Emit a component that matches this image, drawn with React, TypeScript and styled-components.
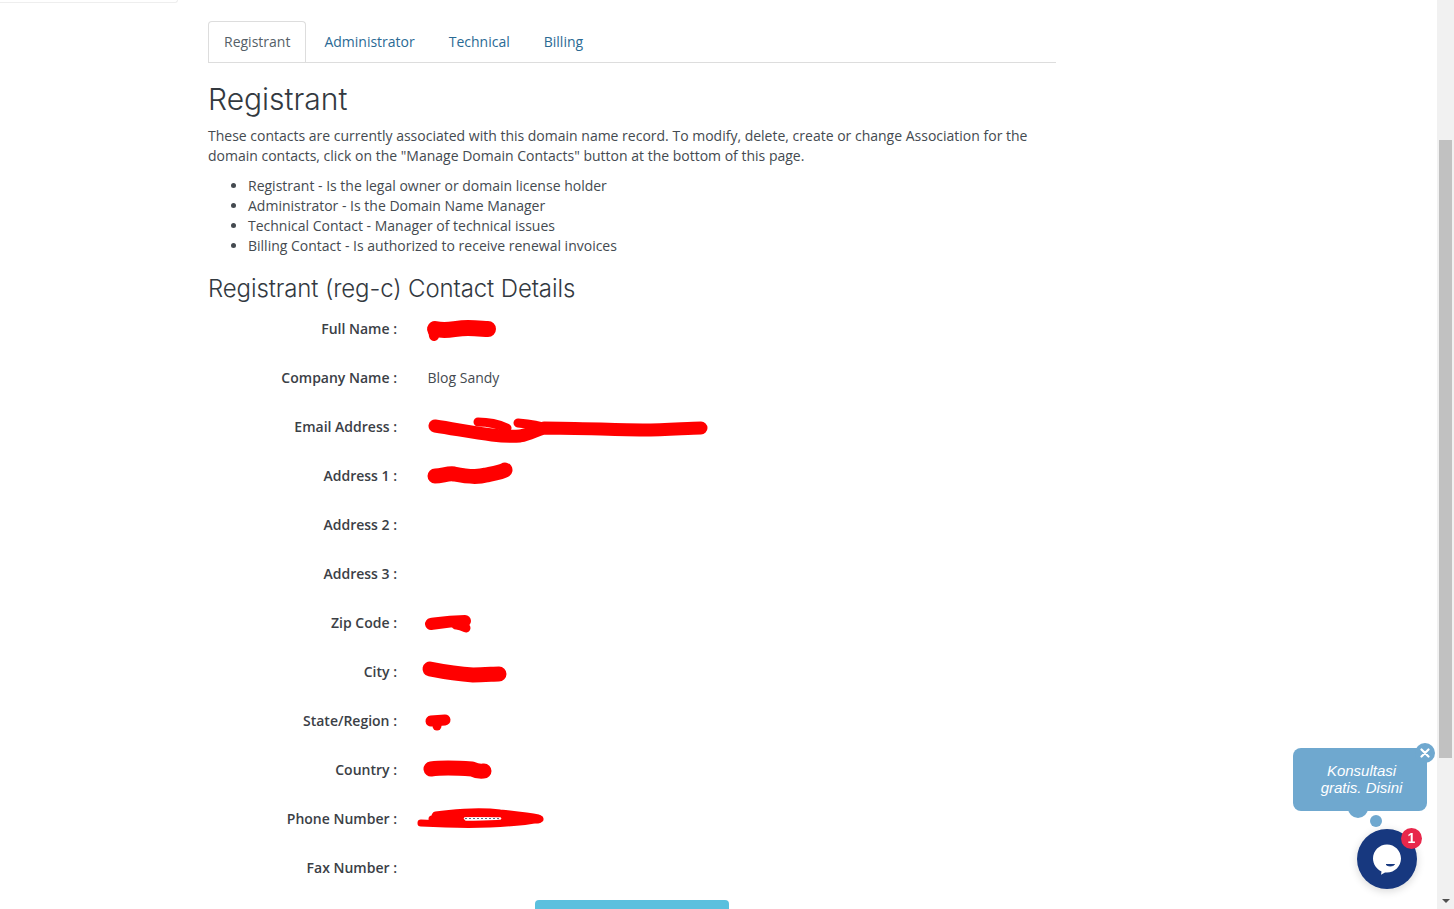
import styled, { createGlobalStyle } from 'styled-components';

const tabs = ['Registrant', 'Administrator', 'Technical', 'Billing'];

const roles = [
  'Registrant - Is the legal owner or domain license holder',
  'Administrator - Is the Domain Name Manager',
  'Technical Contact - Manager of technical issues',
  'Billing Contact - Is authorized to receive renewal invoices',
];

// scribbles are drawn relative to the top left of the value cell
const contacts = [
  {
    label: 'Full Name',
    scribble: [
      { d: 'M5 18 L6 24', w: 10 },
      { d: 'M7 17 C20 20 26 16 40 16 C50 16 56 17 60 17', w: 16 },
    ],
  },
  { label: 'Company Name', value: 'Blog Sandy' },
  {
    label: 'Email Address',
    scribble: [
      { d: 'M7 16 C40 21 70 28 92 26 C102 24 108 20 116 18 C150 18 190 20 215 20 C240 20 260 18 273 18', w: 13 },
      { d: 'M50 12 C60 12 70 14 79 18 M90 13 C100 14 110 15 118 18', w: 9 },
    ],
  },
  {
    label: 'Address 1',
    scribble: [{ d: 'M7 17 C14 17 20 14 26 15 C36 17 48 19 58 16 C68 14 74 13 77 11', w: 15 }],
  },
  { label: 'Address 2' },
  { label: 'Address 3' },
  {
    label: 'Zip Code',
    scribble: [
      { d: 'M3 18 C10 17 20 15 37 15', w: 12 },
      { d: 'M28 19 C32 19 36 21 38 22', w: 9 },
    ],
  },
  { label: 'City', scribble: [{ d: 'M2 14 C12 16 28 19 45 20 C56 20 66 19 71 19', w: 15 }] },
  {
    label: 'State/Region',
    scribble: [
      { d: 'M3 17 L17 16', w: 11 },
      { d: 'M9 18 L9 22', w: 9 },
    ],
  },
  { label: 'Country', scribble: [{ d: 'M3 16 C10 15 30 15 44 16 C50 19 55 18 56 18', w: 15 }] },
  {
    label: 'Phone Number',
    scribble: [
      { d: 'M-7 21 C30 23 80 23 112 17', w: 7 },
      { d: 'M8 14 C20 12 50 9 72 12 C90 14 100 15 110 17', w: 9 },
      { d: 'M4 17 L34 17 M73 17 L110 17', w: 7 },
      { d: 'M37 16.5 L72 16.5', w: 2.5, stroke: '#ffffff' },
      { d: 'M37 16.5 L72 16.5', w: 1, stroke: '#5a6a80', dash: '2 2' },
    ],
  },
  { label: 'Fax Number' },
];

function App() {
  return (
    <>
      <GlobalStyle />
      <Page>
        <Main>
          <Sidebar>
            <SidebarCard />
          </Sidebar>
          <Content>
            <TabList>
              {tabs.map((tab, i) => (
                <TabItem key={tab} $active={i === 0}>
                  {tab}
                </TabItem>
              ))}
            </TabList>
            <Title>Registrant</Title>
            <Intro>
              These contacts are currently associated with this domain name record. To modify, delete, create or
              change Association for the domain contacts, click on the "Manage Domain Contacts" button at the bottom
              of this page.
            </Intro>
            <RoleList>
              {roles.map((role) => (
                <li key={role}>{role}</li>
              ))}
            </RoleList>
            <SubTitle>Registrant (reg-c) Contact Details</SubTitle>
            {contacts.map((contact) => (
              <ContactRow key={contact.label}>
                <ContactLabel>{contact.label} :</ContactLabel>
                <ContactValue>
                  {contact.value}
                  {contact.scribble && (
                    <Scribble viewBox="-20 -10 340 60" width="340" height="60">
                      {contact.scribble.map((stroke, i) => (
                        <path
                          key={i}
                          d={stroke.d}
                          fill="none"
                          stroke={stroke.stroke || '#ff0000'}
                          strokeWidth={stroke.w}
                          strokeDasharray={stroke.dash}
                          strokeLinecap={stroke.dash ? 'butt' : 'round'}
                          strokeLinejoin="round"
                        />
                      ))}
                    </Scribble>
                  )}
                </ContactValue>
              </ContactRow>
            ))}
            <ManageButton />
          </Content>
        </Main>
        <Scrollbar>
          <ScrollThumb />
          <ScrollArrow />
        </Scrollbar>
      </Page>
      <ChatWidget>
        <Bubble>
          Konsultasi
          <br />
          gratis. Disini
          <CloseDot>
            <svg width="10" height="10" viewBox="0 0 10 10">
              <path d="M1.5 1.5 L8.5 8.5 M8.5 1.5 L1.5 8.5" stroke="#ffffff" strokeWidth="2.2" strokeLinecap="round" />
            </svg>
          </CloseDot>
        </Bubble>
        <BigDot />
        <SmallDot />
        <Launcher>
          <svg width="34" height="34" viewBox="0 0 34 34">
            <path
              d="M17 2.5 C24.7 2.5 31 8.8 31 16.5 C31 24.2 24.7 30.5 17 30.5 C16 30.5 15.5 30.5 15 30.6 L11 32.8 L11.5 29.4 C6.5 27.2 3 22.2 3 16.5 C3 8.8 9.3 2.5 17 2.5 Z"
              fill="#ffffff"
            />
            <path d="M16 22.5 C18.5 24.5 22 24.5 24.5 22.5 Z" fill="#17387f" stroke="#17387f" strokeWidth="1" />
          </svg>
          <Badge>1</Badge>
        </Launcher>
      </ChatWidget>
    </>
  );
}

const GlobalStyle = createGlobalStyle`
  html, body {
    margin: 0;
    height: 909px;
    overflow: hidden;
    background: #ffffff;
  }

  body {
    font-family: "Open Sans", "Liberation Sans", sans-serif;
    font-size: 14px;
    line-height: 20px;
    color: #444a50;
  }
`;

const Page = styled.div`
  display: flex;
  height: 909px;
  overflow: hidden;
`;

const Main = styled.main`
  display: flex;
  flex: 1;
  min-width: 0;
`;

const Sidebar = styled.aside`
  width: 178px;
  margin-right: 30px;
`;

const SidebarCard = styled.div`
  height: 2px;
  border-bottom: 1px solid #eeeeee;
  border-right: 1px solid #eeeeee;
  border-bottom-right-radius: 3px;
`;

const Content = styled.section`
  width: 848px;
  padding-top: 21px;
`;

const TabList = styled.div`
  display: flex;
  height: 41px;
  border-bottom: 1px solid #dddddd;
`;

const TabItem = styled.div<{ $active: boolean }>`
  height: 20px;
  padding: 10px 15px;
  margin-right: 2px;
  color: ${(p) => (p.$active ? '#555f68' : '#2a6a94')};
  border: 1px solid ${(p) => (p.$active ? '#dddddd' : 'transparent')};
  border-bottom: 0;
  border-radius: 4px 4px 0 0;
`;

const Title = styled.h1`
  margin: 20px 0 10px;
  font-family: "Inter", "Lato", sans-serif;
  font-size: 30px;
  font-weight: 300;
  line-height: 33px;
  color: #33393f;
`;

const Intro = styled.p`
  margin: 0 0 10px;
`;

const RoleList = styled.ul`
  margin: 0 0 10px;
  padding-left: 40px;
`;

const SubTitle = styled.h3`
  margin: 20px 0 10px;
  font-family: "Inter", "Lato", sans-serif;
  font-size: 24px;
  font-weight: 300;
  line-height: 26px;
  letter-spacing: -0.12px;
  color: #33393f;
`;

const ContactRow = styled.div`
  display: flex;
  height: 34px;
  margin-bottom: 15px;
`;

const ContactLabel = styled.label`
  width: 189px;
  padding-top: 7px;
  text-align: right;
  font-weight: 600;
  color: #3b4046;
`;

const ContactValue = styled.div`
  position: relative;
  margin-left: 30.5px;
  padding-top: 7px;
`;

const Scribble = styled.svg`
  position: absolute;
  left: -20px;
  top: -10px;
  overflow: visible;
`;

const ManageButton = styled.div`
  width: 194px;
  height: 34px;
  margin-left: 327px;
  background: #5bc0de;
  border-radius: 4px;
`;

const Scrollbar = styled.div`
  display: flex;
  flex-direction: column;
  align-items: center;
  width: 17px;
  height: 909px;
  background: #f1f1f1;
`;

const ScrollThumb = styled.div`
  width: 13px;
  height: 618px;
  margin-top: 140px;
  background: #c1c1c1;
`;

const ScrollArrow = styled.div`
  width: 0;
  height: 0;
  margin-top: auto;
  margin-bottom: 6px;
  border-left: 4px solid transparent;
  border-right: 4px solid transparent;
  border-top: 4px solid #505050;
`;

const ChatWidget = styled.div`
  position: fixed;
  left: 1293px;
  top: 748px;
  width: 150px;
  height: 150px;
`;

const Bubble = styled.div`
  position: relative;
  z-index: 1;
  box-sizing: border-box;
  width: 134px;
  height: 63px;
  padding: 14px 0 0 3px;
  font-family: "Liberation Sans", Arial, sans-serif;
  font-size: 15px;
  font-style: italic;
  line-height: 17px;
  text-align: center;
  color: #ffffff;
  background: #6fa8cf;
  border-radius: 8px;
`;

const CloseDot = styled.span`
  position: absolute;
  right: -8px;
  top: -5px;
  display: flex;
  align-items: center;
  justify-content: center;
  width: 20px;
  height: 20px;
  background: #6fa8cf;
  border-radius: 50%;
`;

const BigDot = styled.div`
  position: absolute;
  left: 55px;
  top: 50px;
  width: 20px;
  height: 20px;
  background: #6fa8cf;
  border-radius: 50%;
`;

const SmallDot = styled.div`
  position: absolute;
  left: 77px;
  top: 67px;
  width: 12px;
  height: 12px;
  background: #6fa8cf;
  border-radius: 50%;
`;

const Launcher = styled.div`
  position: absolute;
  left: 64px;
  top: 81px;
  display: flex;
  align-items: center;
  justify-content: center;
  width: 60px;
  height: 60px;
  background: #17387f;
  border-radius: 50%;
  box-shadow: 0 2px 8px rgba(0, 0, 0, 0.16);
`;

const Badge = styled.span`
  position: absolute;
  right: -5px;
  top: -1px;
  width: 21px;
  height: 21px;
  font-family: "Liberation Sans", Arial, sans-serif;
  font-size: 14px;
  font-weight: 700;
  line-height: 21px;
  text-align: center;
  color: #ffffff;
  background: #e8274b;
  border-radius: 50%;
`;

export default App;
